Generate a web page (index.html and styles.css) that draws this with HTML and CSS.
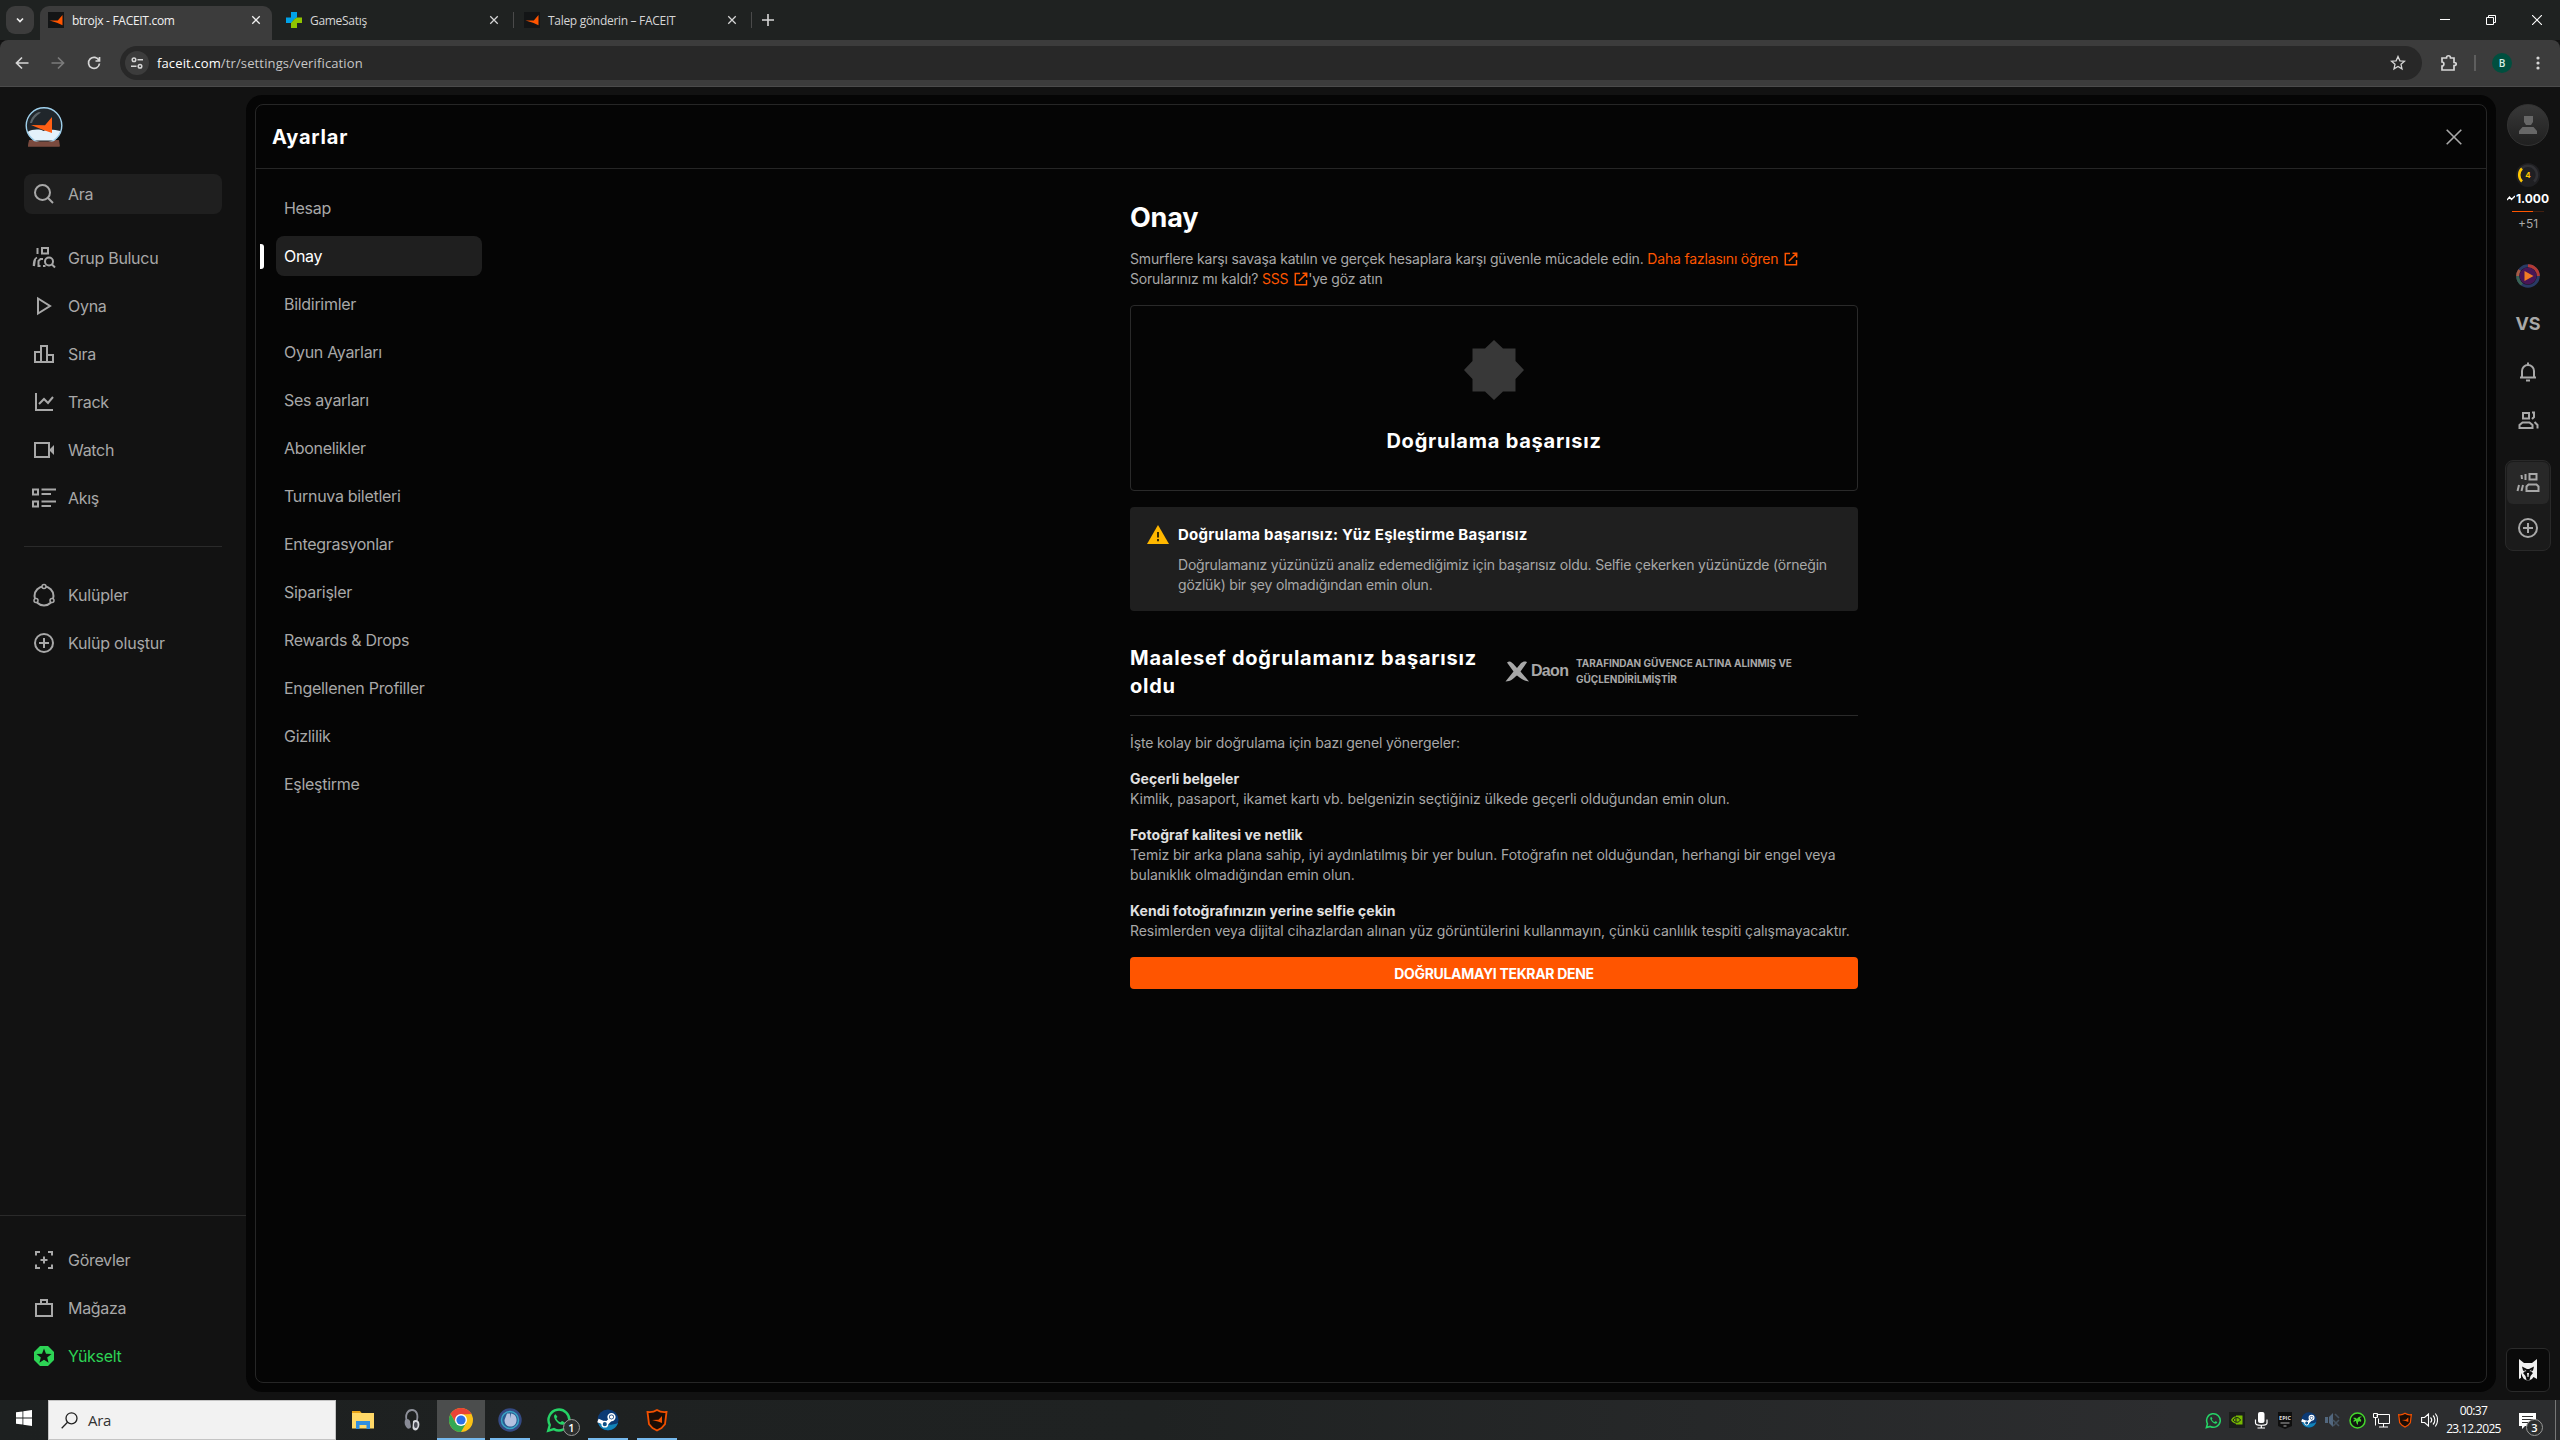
FILE: index.html
```html
<!DOCTYPE html>
<html lang="tr">

<head>
    <meta charset="UTF-8">
    <meta name="viewport" content="width=device-width, initial-scale=1.0">
    <title>btrojx - FACEIT.com</title>
    <link rel="stylesheet" href="styles.css">
</head>

<body>
    <!-- Shared icons -->
    <svg class="defs" width="0" height="0">
        <symbol id="i-close" viewBox="0 0 16 16"><path d="M2 2l12 12M14 2L2 14" fill="none" stroke="currentColor" stroke-width="2" /></symbol>
        <symbol id="i-faceit" viewBox="0 0 16 16"><path fill="#131516" d="M0 0h16v16H0z" /><path fill="#ff5500" d="M14.500 3v10.200L9 10.800 1.500 8.600h8.300z" /></symbol>
        <symbol id="i-plus-circle" viewBox="0 0 24 24"><g fill="none" stroke="currentColor" stroke-width="2"><circle cx="12" cy="12" r="9" /><path d="M12 7v10M7 12h10" /></g></symbol>
        <symbol id="i-external" viewBox="0 0 14 14"><path d="M6 1.500H1.300v11.200h11.200V8M8.500 1.300h4.200v4.200M12.500 1.500L4.800 9.200" fill="none" stroke="currentColor" stroke-width="1.500" /></symbol>
        <symbol id="i-whatsapp" viewBox="0 0 24 24"><path d="M2 22l1.500-5.400A9.600 9.600 0 1 1 7.300 20.400z" fill="none" stroke="#25d366" stroke-width="2.200" /><path d="M8.800 6.800c-2 .8-1.800 3.300.7 6.300s5.600 4.300 7.400 2.500c.8-1 .5-1.400-.2-1.800l-1.800-.8c-.6 0-1 1.100-1.500 1.100-1.500-.4-3.200-2-3.800-3.600 0-.5.900-1 .9-1.500z" fill="#25d366" /></symbol>
        <symbol id="i-steam" viewBox="0 0 24 24"><circle cx="12" cy="12" r="11.500" fill="#0b3a75" /><path d="M1 15a11.500 11.500 0 0 0 22 0c-4 3-18 3-22 0z" fill="#1283b8" /><path d="M1 12.500l9 3.700 5-5" fill="none" stroke="#fff" stroke-width="4" /><circle cx="15.800" cy="8.800" r="3.600" fill="#0b3a75" stroke="#fff" stroke-width="1.800" /><circle cx="15.800" cy="8.800" r="1.900" fill="#fff" /><circle cx="8.500" cy="16.500" r="3" fill="#0d4f86" stroke="#fff" stroke-width="1.500" /></symbol>
        <symbol id="i-shield" viewBox="0 0 24 24"><path d="M12 2c3 2 6 2.500 9.500 2l-1.500 12-3.500 4L12 22.500 7.500 20 4 16 2.500 4C6 4.500 9 4 12 2z" fill="#1a0d06" stroke="#f25000" stroke-width="1.800" /><path d="M17 8v7l-4-1.500L7 12l6.500-.3z" fill="#f25000" /></symbol>
    </svg>

    <header class="browser">
        <div class="tabs">
            <button class="tab-search"><svg width="12" height="12" viewBox="0 0 12 12"><path d="M3 4.500l3 3 3-3" fill="none" stroke="currentColor" stroke-width="1.700" /></svg></button>
            <div class="tab active">
                <svg width="16" height="16"><use href="#i-faceit" /></svg>
                <span>btrojx - FACEIT.com</span>
                <svg class="x" width="10" height="10"><use href="#i-close" /></svg>
            </div>
            <div class="tab">
                <svg width="16" height="16" viewBox="0 0 16 16"><path fill="#00a2e8" d="M5 0h6v5.500L7.500 8 5.500 11H0V5.500h5z" /><path fill="#8fc400" d="M11 5.500h5V11h-5v5H5v-5l3.500-4z" /></svg>
                <span>GameSatış</span>
                <svg class="x" width="10" height="10"><use href="#i-close" /></svg>
            </div>
            <div class="tab line">
                <svg width="16" height="16"><use href="#i-faceit" /></svg>
                <span>Talep gönderin – FACEIT</span>
                <svg class="x" width="10" height="10"><use href="#i-close" /></svg>
            </div>
            <div class="new-tab"><svg width="12" height="12" viewBox="0 0 12 12"><path d="M6 0v12M0 6h12" stroke="currentColor" stroke-width="1.600" /></svg></div>
            <div class="window-controls">
                <svg width="10" height="10" viewBox="0 0 10 10"><path d="M0 4.500h10" stroke="#fff" /></svg>
                <svg width="10" height="10" viewBox="0 0 10 10"><path d="M.5 2.500h7v7h-7zM2.500 2.500v-2h7v7h-2" fill="none" stroke="#fff" /></svg>
                <svg width="10" height="10" viewBox="0 0 10 10"><path d="M0 0l10 10M10 0L0 10" stroke="#fff" stroke-width="1.100" /></svg>
            </div>
        </div>
        <div class="toolbar">
            <svg width="16" height="16" viewBox="0 0 16 16"><path d="M14.500 8H3M8 2.500L2.500 8 8 13.500" fill="none" stroke="currentColor" stroke-width="1.700" /></svg>
            <svg class="off" width="16" height="16" viewBox="0 0 16 16"><path d="M1.500 8H13M8 2.500L13.500 8 8 13.500" fill="none" stroke="currentColor" stroke-width="1.700" /></svg>
            <svg width="16" height="16" viewBox="0 0 16 16"><path d="M13 5.500A5.500 5.500 0 1 0 13.500 8.500M13.500 2v4h-4" fill="none" stroke="currentColor" stroke-width="1.700" /></svg>
            <div class="url">
                <span class="site"><svg width="14" height="14" viewBox="0 0 14 14"><g fill="none" stroke="currentColor" stroke-width="1.500"><circle cx="4" cy="3.800" r="1.800" /><path d="M7.500 3.800H13M1 10.200h5.500" /><circle cx="10" cy="10.200" r="1.800" /></g></svg></span>
                <span class="address"><b>faceit.com</b>/tr/settings/verification</span>
                <svg class="star" width="16" height="16" viewBox="0 0 16 16"><path d="M8 1.500l1.900 4.300 4.600.4-3.500 3.100 1 4.600L8 11.500l-4 2.400 1-4.600L1.500 6.200l4.600-.4z" fill="none" stroke="currentColor" stroke-width="1.300" /></svg>
            </div>
            <svg class="puzzle" width="18" height="18" viewBox="0 0 18 18"><path d="M2 4h4.500c0-3 4-3 4 0H14v4.500c3 0 3 3 0 3V16H2v-4c2.500-.2 2.500-4 0-4z" fill="none" stroke="currentColor" stroke-width="1.700" /></svg>
            <i class="bar"></i>
            <span class="profile">B</span>
            <svg class="dots" width="4" height="14" viewBox="0 0 4 14"><g fill="currentColor"><circle cx="2" cy="2" r="1.600" /><circle cx="2" cy="7" r="1.600" /><circle cx="2" cy="12" r="1.600" /></g></svg>
        </div>
    </header>

    <div class="app">
        <aside class="sidebar">
            <svg class="logo" width="38" height="40" viewBox="0 0 38 40">
                <path d="M4 33h30l1 6.500H3z" fill="#7a4a3e" /><path d="M9 33h20v2H9z" fill="#a4695a" />
                <circle cx="19" cy="18.500" r="17.800" fill="#20262b" />
                <path d="M2.500 25c5-3 12-3 16-1 5-2 11-1 17 0-1 4-3 7-6.500 9.500H9C6 31.500 3.500 28.500 2.500 25z" fill="#e4f2fb" />
                <circle cx="19" cy="18.500" r="17.800" fill="none" stroke="#9fd0ec" stroke-width="1.400" />
                <path d="M5 16c1-5 4-9 9-11l2 .5C11 9 8 12 7 16z" fill="#5b6469" />
                <path d="M27 10v16l-10-3.500L6 18l14 .3z" fill="#ff5f14" />
                <path d="M4 34.500h30v5H3z" fill="#7a4a3e" />
            </svg>
            <div class="search">
                <svg class="ico" viewBox="0 0 24 24"><circle cx="10.500" cy="10.500" r="7.500" /><path d="M16 16l5 5" /></svg>
                <span>Ara</span>
            </div>
            <nav class="menu">
                <a><svg class="ico" viewBox="0 0 24 24"><path d="M10 2h6v5.500h-6zM5.500 2v6M3 13l-1 7M8.500 20H6.500v-5l2-2H11M13.500 20H11" /><path d="M5 11.500c-2 1-3.500 3-3.500 8.500" stroke-width="1.500" /><circle cx="17" cy="15.500" r="4" /><path d="M20 18.500l3 3" /></svg><span>Grup Bulucu</span></a>
                <a><svg class="ico" viewBox="0 0 24 24"><path d="M6 4.500v15L18 12z" /></svg><span>Oyna</span></a>
                <a><svg class="ico" viewBox="0 0 24 24"><path d="M3 10h6v10H3zM9 4h6v16H9zM15 13h6v7h-6z" /></svg><span>Sıra</span></a>
                <a><svg class="ico" viewBox="0 0 24 24"><path d="M4 3v17h17M7 14l5-5 4 4 5-6" /></svg><span>Track</span></a>
                <a><svg class="ico" viewBox="0 0 24 24"><path d="M3 5h14v14H3z" /><path d="M17 12l5-5v10z" fill="currentColor" stroke="none" /></svg><span>Watch</span></a>
                <a><svg class="ico" viewBox="0 0 24 24"><path d="M1 3.500h5v5H1zM1 15.500h5v5H1zM9.500 3.500H24M9.500 8H19M9.500 15.500H24M9.500 20H19" /></svg><span>Akış</span></a>
            </nav>
            <nav class="menu clubs">
                <a><svg class="ico" viewBox="0 0 24 24"><circle cx="12" cy="13" r="9.500" /><g class="joint"><circle cx="12" cy="3.500" r="2" /><circle cx="4" cy="17.500" r="2" /><circle cx="20" cy="17.500" r="2" /></g></svg><span>Kulüpler</span></a>
                <a><svg class="ico"><use href="#i-plus-circle" /></svg><span>Kulüp oluştur</span></a>
            </nav>
            <nav class="menu bottom">
                <a><svg class="ico" viewBox="0 0 24 24"><path d="M4 7.500V4h4M16 4h4v3.500M20 16.500V20h-4M8 20H4v-3.500M12 8.500v7M8.500 12h7" /></svg><span>Görevler</span></a>
                <a><svg class="ico" viewBox="0 0 24 24"><path d="M4 8h16v12H4zM9 8V4h6v4" /></svg><span>Mağaza</span></a>
                <a class="upgrade"><svg class="ico" viewBox="0 0 24 24"><path d="M8 2h8l6 6v8l-6 6H8l-6-6V8z" fill="#2dd455" stroke="none" /><path d="M12 4.500l2 5.200 5.500.2-4.300 3.500 1.400 5.400-4.600-3.100-4.600 3.100 1.400-5.400L4.500 9.900l5.500-.2z" fill="#121212" stroke="none" /></svg><span>Yükselt</span></a>
            </nav>
        </aside>

        <main class="stage">
            <div class="modal">
                <div class="modal-head">
                    <h1>Ayarlar</h1>
                    <svg width="16" height="16" viewBox="0 0 16 16"><path d="M.7.700l14.600 14.600M15.300.700L.7 15.300" stroke="currentColor" stroke-width="1.600" /></svg>
                </div>
                <div class="modal-body">
                    <nav class="settings">
                        <a>Hesap</a>
                        <a class="current">Onay</a>
                        <a>Bildirimler</a>
                        <a>Oyun Ayarları</a>
                        <a>Ses ayarları</a>
                        <a>Abonelikler</a>
                        <a>Turnuva biletleri</a>
                        <a>Entegrasyonlar</a>
                        <a>Siparişler</a>
                        <a>Rewards &amp; Drops</a>
                        <a>Engellenen Profiller</a>
                        <a>Gizlilik</a>
                        <a>Eşleştirme</a>
                    </nav>
                    <section class="verify">
                        <h2>Onay</h2>
                        <p class="lead">Smurflere karşı savaşa katılın ve gerçek hesaplara karşı güvenle mücadele edin. <a class="link">Daha fazlasını öğren <svg width="14" height="14"><use href="#i-external" /></svg></a><br>Sorularınız mı kaldı? <a class="link">SSS <svg width="14" height="14"><use href="#i-external" /></svg></a>'ye göz atın</p>

                        <div class="status">
                            <svg width="60" height="60" viewBox="0 0 60 60"><path fill="#383838" d="M30 0l9 8.500h12.500V21L60 30l-8.500 9v12.500H39L30 60l-9-8.500H8.500V39L0 30l8.500-9V8.500H21z" /></svg>
                            <h3>Doğrulama başarısız</h3>
                        </div>

                        <div class="alert">
                            <svg width="22" height="19" viewBox="0 0 22 19"><path d="M11 0l11 19H0z" fill="#ffb800" /><path d="M11 7v5.500M11 14v2.200" stroke="#3a2b00" stroke-width="2" /></svg>
                            <div>
                                <h4>Doğrulama başarısız: Yüz Eşleştirme Başarısız</h4>
                                <p>Doğrulamanız yüzünüzü analiz edemediğimiz için başarısız oldu. Selfie çekerken yüzünüzde (örneğin<br>gözlük) bir şey olmadığından emin olun.</p>
                            </div>
                        </div>

                        <div class="result">
                            <h3>Maalesef doğrulamanız başarısız<br>oldu</h3>
                            <div class="daon">
                                <svg width="24" height="21" viewBox="0 0 24 21"><path fill="#a8a8a8" d="M2 1.500C5-1 7 1 12 7c4-5 5-7 9-6.500l1 .8L15.500 10.500 24 20.500c-5-.5-8-3-12-6-4 3-6 6-11.500 6L8.500 10.500z" /></svg>
                                <b>Daon</b>
                                <span>TARAFINDAN GÜVENCE ALTINA ALINMIŞ VE<br>GÜÇLENDİRİLMİŞTİR</span>
                            </div>
                        </div>

                        <p class="intro">İşte kolay bir doğrulama için bazı genel yönergeler:</p>
                        <h5>Geçerli belgeler</h5>
                        <p>Kimlik, pasaport, ikamet kartı vb. belgenizin seçtiğiniz ülkede geçerli olduğundan emin olun.</p>
                        <h5>Fotoğraf kalitesi ve netlik</h5>
                        <p>Temiz bir arka plana sahip, iyi aydınlatılmış bir yer bulun. Fotoğrafın net olduğundan, herhangi bir engel veya<br>bulanıklık olmadığından emin olun.</p>
                        <h5>Kendi fotoğrafınızın yerine selfie çekin</h5>
                        <p class="last">Resimlerden veya dijital cihazlardan alınan yüz görüntülerini kullanmayın, çünkü canlılık tespiti çalışmayacaktır.</p>
                        <button class="retry">DOĞRULAMAYI TEKRAR DENE</button>
                    </section>
                </div>
            </div>
        </main>

        <aside class="rail">
            <div class="avatar"><svg width="18" height="18" viewBox="0 0 18 18"><path d="M5 0h9v6l-2 3H7L5 6zM0 18v-3l3.500-4h11l3.500 4v3z" fill="#676767" /></svg></div>
            <svg class="level" width="24" height="24" viewBox="0 0 24 24"><circle cx="12" cy="12" r="12" fill="#1f1f22" /><path d="M6 18.500a9 9 0 1 1 12 0" fill="none" stroke="#303034" stroke-width="2.500" /><path d="M6 18.500a9 9 0 0 1 0-13" fill="none" stroke="#ffc800" stroke-width="2.500" /><text x="12" y="15" text-anchor="middle" class="level-text">4</text></svg>
            <div class="elo"><svg width="8" height="6" viewBox="0 0 8 6"><path d="M0 5l2.500-3 2 2.500L8 1" fill="none" stroke="#fff" stroke-width="1.400" /></svg><span>1.000</span></div>
            <div class="progress"><i></i></div>
            <div class="gain">+51</div>
            <svg class="media" width="24" height="24" viewBox="0 0 24 24"><g fill="none" stroke-width="3"><circle cx="12" cy="12" r="10.300" stroke="#293a65" /><path d="M12 1.700A10.300 10.300 0 0 1 22.300 12" stroke="#b33a35" /><path d="M6 20.400A10.300 10.300 0 0 1 1.700 12" stroke="#3a6255" /><path d="M1.700 12A10.300 10.300 0 0 1 3.500 6" stroke="#a85b43" /></g><circle cx="12" cy="12" r="8.500" fill="#481656" /><path d="M8.500 7v10l9-5z" fill="#f07c24" /></svg>
            <div class="vs">VS</div>
            <svg class="ico bell" viewBox="0 0 24 24"><path d="M6 17v-6a6 6 0 0 1 12 0v6M4 17.500h16M10 20.500h4M12 2.500V5" /></svg>
            <svg class="ico friends" viewBox="0 0 24 24"><path d="M7 5h6v5.500H7zM3.500 20v-3l3-2.500h7l3 2.500v3zM16 4.500h2V9l-2 2M18.500 14l3 3v3.500" /></svg>
            <div class="party">
                <div class="party-on"><svg class="ico" viewBox="0 0 24 24"><path d="M13.500 3h7v5.500h-7zM10.500 20v-4.500l2-2h8l2 2V20zM9.500 3v6M5.500 4l.5 4M7 14l-1.500 6M3 14l-1.500 6" /></svg></div>
                <svg class="ico"><use href="#i-plus-circle" /></svg>
            </div>
            <div class="wolf"><svg width="18" height="22" viewBox="0 0 18 22"><path fill="#f0f0f0" d="M0 0l5 4h8l5-4v20l-3.500-2-1.500 2-4 2-4-2-1.500-2L0 20z" /><path fill="#0d0d0d" d="M3 7.500l5 2.500h2l5-2.500-1 4-2 1 2 1.500-2.500 3-1 4L9 22l-1.500-1-1-4L4 14l2-1.500-2-1zM2 14l2 5H2z" /><path fill="#f0f0f0" d="M5 10.500l2.500 1.500-1 .5zM13 10.500L10.500 12l1 .5zM8 14h2l-.5 4h-1z" /></svg></div>
        </aside>
    </div>

    <footer class="taskbar">
        <div class="start"><svg width="16" height="16" viewBox="0 0 16 16"><path fill="#fff" d="M0 2.300L6.500 1.400v6.200H0zM7.300 1.300L16 0v7.600H7.300zM0 8.400h6.500v6.200L0 13.700zM7.300 8.400H16V16l-8.700-1.300z" /></svg></div>
        <div class="find"><svg width="17" height="17" viewBox="0 0 17 17"><g fill="none" stroke="#222" stroke-width="1.300"><circle cx="10.500" cy="6.300" r="5.500" /><path d="M6.500 10.300L.7 16.200" /></g></svg><span>Ara</span></div>
        <div class="apps">
            <div class="app-btn"><svg width="22" height="18" viewBox="0 0 22 18"><path fill="#e8a317" d="M0 0h8l2 2.500H0z" /><path fill="#ffd867" d="M0 2h22v15.500H0z" /><path fill="#2f8ee0" d="M4 10h14v8h-3.500v-4h-7v4H4z" /></svg></div>
            <div class="app-btn"><svg width="18" height="24" viewBox="0 0 18 24"><path d="M4 14C1.500 6 5 2 9 2s7 4 4.500 12" fill="none" stroke="#8f919b" stroke-width="1.800" /><path d="M2 12c2-2 4-1 5 1l1 6c-1 2-3 2-4 1-2-2-3-5-2-8z" fill="#888b96" /><path d="M10 13c2-2 5-1 6 1 1 3 0 6-2 8-2 1-4 0-4.500-2z" fill="#d5d7dc" /><ellipse cx="12.800" cy="17" rx="1.800" ry="3" fill="#4a4c55" /></svg></div>
            <div class="app-btn focused open"><svg width="24" height="24" viewBox="0 0 24 24"><circle cx="12" cy="12" r="12" fill="#fbc116" /><path d="M1.600 6A12 12 0 0 1 22.400 6L12 6.500l-5 8.400z" fill="#ea4335" /><path d="M1.600 6A12 12 0 0 0 12 24l5.200-9-10.400 0z" fill="#34a853" /><circle cx="12" cy="12" r="6" fill="#fff" /><circle cx="12" cy="12" r="4.600" fill="#2c70e6" /></svg></div>
            <div class="app-btn open"><svg width="24" height="24" viewBox="0 0 24 24"><circle cx="12" cy="12" r="11.700" fill="#344a83" /><circle cx="12" cy="12" r="8.500" fill="#295b91" stroke="#39a6c6" stroke-width="1.500" /><path d="M9 5.500h3v5l1-5c4 .5 6 3.500 5.500 7.500s-3.500 6-7 5.500-5-3.500-5-6.500z" fill="#b4c1e0" /></svg></div>
            <div class="app-btn"><svg width="26" height="26"><use href="#i-whatsapp" /></svg><span class="count">1</span></div>
            <div class="app-btn open"><svg width="22" height="22"><use href="#i-steam" /></svg></div>
            <div class="app-btn open"><svg width="24" height="24"><use href="#i-shield" /></svg></div>
        </div>
        <div class="tray">
            <svg width="17" height="17"><use href="#i-whatsapp" /></svg>
            <svg width="16" height="16" viewBox="0 0 16 16"><path fill="#1a1d1a" d="M0 0h16v16H0z" /><path fill="#76b900" d="M7 3.500h6.500v9H7zM2 8c1-2.500 3-3.800 5-3.800v7.500C5 11.500 3 10 2 8z" /><path d="M4 8c2-3.500 6-3 7.500 0-2 3-5.500 3-7.500 0zM7 6v4" fill="none" stroke="#1a1d1a" /></svg>
            <svg width="14" height="17" viewBox="0 0 14 17"><rect x="4" y="0" width="6.500" height="11" rx="2" fill="#fff" /><path d="M1.500 7.500v3.500c0 3 11.500 3 11.500 0V7.500M7.300 13v3M3.500 16h7.500" fill="none" stroke="#fff" stroke-width="1.200" /></svg>
            <svg width="14" height="17" viewBox="0 0 14 17"><path fill="#0e0e0e" d="M0 0h14v14l-7 3-7-3z" /><text x="7" y="8" text-anchor="middle" class="epic">EPIC</text><path d="M2.500 11h9M5.500 14h3" stroke="#aaa" /></svg>
            <svg width="16" height="16"><use href="#i-steam" /></svg>
            <svg width="16" height="16" viewBox="0 0 16 16"><path fill="#52677e" d="M0 5h3v6H0zM4 5l4-4v14l-4-4z" /><path d="M8 8l6 6M14 8l-6 6M10 2l4 4" stroke="#455361" stroke-width="1.600" /></svg>
            <svg width="17" height="17" viewBox="0 0 17 17"><circle cx="8.500" cy="8.500" r="7.500" fill="#101510" stroke="#44d62c" stroke-width="1.500" /><path d="M4 6c2-.5 3 0 4 1 1-2 3-3 5-2-2 0-2 1-2 2 1 0 1.500 1 1 3-1-1-2-1-3 0v3c-1-1-2-2-2-4-1 0-2 .5-2 1.500C4 9 4.500 8 6 7.500z" fill="#44d62c" /></svg>
            <svg width="17" height="15" viewBox="0 0 17 15"><path d="M4 3.500V1.500h12.500v9h-11v-5M10.500 11v3M6 14h9M.5.500h4v4h-4zM2.500 4.500v8" fill="none" stroke="#fff" /></svg>
            <svg width="16" height="16"><use href="#i-shield" /></svg>
            <svg width="17" height="16" viewBox="0 0 17 16"><path d="M.6 5.500h3L7.500 2v12L3.600 10.500h-3zM9.500 5.500c1.500 1.500 1.500 3.500 0 5M12 3.500c2.500 2.500 2.500 6.500 0 9M14.300 1.500c3 3.500 3 9.500 0 13" fill="none" stroke="#fff" stroke-width="1.100" /></svg>
        </div>
        <div class="clock"><span>00:37</span><span>23.12.2025</span></div>
        <div class="notes"><svg width="17" height="16" viewBox="0 0 17 16"><path fill="#fff" d="M0 0h17v13H6l-3 3v-3H0z" /><path d="M3 3.500h11M3 6.500h11M3 9.500h7" stroke="#333" /></svg><span class="count">3</span></div>
    </footer>
</body>

</html>
```
FILE: styles.css
```css
* {
    box-sizing: border-box;
}

body {
    margin: 0;
    width: 2560px;
    height: 1440px;
    display: flex;
    flex-direction: column;
    overflow: hidden;
    background-color: #121212;
    color: #a8a8a8;
    font-family: Inter, sans-serif;
    font-size: 16px;
}

h1, h2, h3, h4, h5, p {
    margin: 0;
}

svg {
    flex-shrink: 0;
}

.defs {
    position: absolute;
}

/* browser */
.browser {
    height: 87px;
    font-family: "Open Sans", sans-serif;
    font-size: 12px;
    color: #d6d6d6;
}

.tabs {
    height: 40px;
    padding: 6px 0 0 6px;
    display: flex;
    background-color: #1f2221;
}

.tab-search {
    width: 28px;
    height: 28px;
    margin-right: 6px;
    padding: 8px;
    border: 0;
    border-radius: 9px;
    background-color: #3c3c3c;
    color: #eee;
}

.tab-search svg {
    display: block;
}

.tab {
    width: 232px;
    height: 34px;
    padding: 0 11px 6px 8px;
    display: flex;
    align-items: center;
    gap: 8px;
    letter-spacing: -0.3px;
}

.tab + .tab {
    width: 238px;
    padding-left: 14px;
    padding-right: 11px;
}

.tab.active {
    border-radius: 9px 9px 0 0;
    background-color: #3c3c3c;
    color: #f0f0f0;
}

.tab.line {
    position: relative;
}

.tab.line::before,
.new-tab::before {
    content: "";
    width: 1px;
    height: 16px;
    background-color: #4a4a4a;
}

.tab.line::before {
    position: absolute;
    left: 3px;
}

.tab .x {
    margin-left: auto;
}

.new-tab {
    height: 28px;
    margin-left: 3px;
    display: flex;
    align-items: center;
    gap: 10px;
}

.window-controls {
    height: 28px;
    margin-left: auto;
    padding-right: 18px;
    display: flex;
    align-items: center;
    gap: 36px;
}

.toolbar {
    height: 47px;
    padding: 0 20px 0 14px;
    display: flex;
    align-items: center;
    gap: 20px;
    border-bottom: 1px solid #4b4b4b;
    border-radius: 8px 8px 0 0;
    background-color: #3c3c3c;
}

.toolbar .off {
    color: #7b7b7b;
}

.url {
    flex: 1;
    height: 34px;
    margin: 0 -3px 0 -2px;
    padding: 0 16px 0 5px;
    display: flex;
    align-items: center;
    gap: 8px;
    border-radius: 17px;
    background-color: #282828;
}

.url b {
    font-weight: 400;
    color: #fff;
}

.address {
    font-size: 13px;
    letter-spacing: 0.13px;
    color: #c7c7c7;
}

.site {
    width: 24px;
    height: 24px;
    padding: 5px;
    border-radius: 50%;
    background-color: #3c3c3c;
}

.site svg {
    display: block;
}

.star {
    margin-left: auto;
}

.puzzle {
    margin: 0 -1px 0 1px;
}

.bar {
    width: 2px;
    height: 16px;
    margin: 0 -4px 0 -3px;
    background-color: #5e5e5e;
}

.profile {
    width: 20px;
    height: 20px;
    line-height: 20px;
    border-radius: 50%;
    background-color: #004f3f;
    color: #d8efe6;
    font-size: 10px;
    font-weight: 600;
    text-align: center;
}

.dots {
    margin-left: 4px;
}

/* page */
.app {
    height: 1313px;
    display: flex;
}

.ico {
    width: 24px;
    height: 24px;
    fill: none;
    stroke: currentColor;
    stroke-width: 2;
}

.sidebar {
    width: 246px;
    display: flex;
    flex-direction: column;
}

.logo {
    margin: 20px 0 27px 25px;
}

.search {
    width: 198px;
    height: 40px;
    margin: 0 0 20px 24px;
    padding-left: 8px;
    display: flex;
    align-items: center;
    gap: 12px;
    border-radius: 8px;
    background-color: #1f1f1f;
}

.search,
.menu,
.settings {
    letter-spacing: -0.3px;
}

.menu {
    padding: 0 24px;
}

.menu a {
    height: 48px;
    padding-left: 8px;
    display: flex;
    align-items: center;
    gap: 12px;
}

.clubs {
    margin: 24px 24px 0;
    padding: 24px 0 0;
    border-top: 1px solid #2a2a2a;
}

.clubs a {
    letter-spacing: -0.2px;
}

.joint {
    fill: #121212;
    stroke-width: 1.5;
}

.bottom {
    margin-top: auto;
    padding-top: 20px;
    padding-bottom: 20px;
    border-top: 1px solid #2a2a2a;
}

.menu .upgrade {
    color: #2dd455;
}

.stage {
    flex: 1;
    margin: 8px 0;
    padding: 9px;
    border-radius: 16px;
    background-color: #050505;
}

.modal {
    height: 1279px;
    border: 1px solid #262626;
    border-radius: 8px;
}

.modal-head {
    height: 64px;
    padding: 0 24px 0 16px;
    display: flex;
    align-items: center;
    justify-content: space-between;
    border-bottom: 1px solid #262626;
}

h1, h2, h3 {
    color: #fff;
    font-size: 20px;
    font-weight: 700;
    line-height: 28px;
    letter-spacing: 0.77px;
}

.modal-body {
    display: flex;
}

.settings {
    width: 230px;
    padding: 19px 4px 0 20px;
    display: flex;
    flex-direction: column;
    gap: 8px;
}

.settings a {
    position: relative;
    height: 40px;
    line-height: 40px;
    padding-left: 8px;
    border-radius: 8px;
}

.settings .current {
    background-color: #1f1f1f;
    color: #fff;
}

.settings .current::before {
    content: "";
    position: absolute;
    left: -16px;
    top: 8px;
    width: 4px;
    height: 25px;
    border-radius: 0 3px 3px 0;
    background-color: #fff;
}

.verify {
    width: 728px;
    margin-left: 644px;
    padding-top: 32px;
    font-size: 14px;
    line-height: 20px;
    letter-spacing: -0.07px;
}

.verify h2 {
    margin-bottom: 14px;
    font-size: 27px;
    line-height: 34px;
    letter-spacing: -0.2px;
}

.lead {
    letter-spacing: -0.18px;
}

.link {
    color: #ff5500;
}

.link svg {
    margin-left: 2px;
    vertical-align: -2px;
}

.status {
    height: 186px;
    margin: 16px 0;
    padding-top: 34px;
    display: flex;
    flex-direction: column;
    align-items: center;
    gap: 27px;
    border: 1px solid #2a2a2a;
    border-radius: 4px;
}

.alert {
    height: 104px;
    padding: 18px 0 0 17px;
    display: flex;
    gap: 9px;
    border-radius: 4px;
    background-color: #1f1f1f;
}

.alert h4 {
    margin-bottom: 10px;
    color: #fff;
    font-size: 15px;
    line-height: 20px;
    letter-spacing: 0.24px;
}

.alert p {
    letter-spacing: -0.2px;
}

.result {
    height: 105px;
    padding-top: 33px;
    display: flex;
    justify-content: space-between;
    border-bottom: 1px solid #2a2a2a;
}

.daon {
    width: 353px;
    height: 54px;
    display: flex;
    align-items: center;
}

.daon b {
    margin: 0 8px 0 2px;
    width: 37px;
    font-family: "Liberation Sans", sans-serif;
    font-size: 16px;
    letter-spacing: -0.7px;
    color: #a8a8a8;
}

.daon span {
    font-size: 10px;
    font-weight: 700;
    line-height: 16px;
    letter-spacing: -0.03px;
}

.intro {
    margin-top: 17px;
    letter-spacing: -0.12px;
}

h5 {
    margin-top: 16px;
    color: #e0e0e0;
    font-size: 14px;
    letter-spacing: 0.06px;
}

.last {
    margin-bottom: 16px;
}

.retry {
    width: 728px;
    height: 32px;
    border: 0;
    border-radius: 4px;
    background-color: #ff5500;
    color: #fff;
    font: 700 14px Inter, sans-serif;
    letter-spacing: -0.33px;
}

/* right rail */
.rail {
    width: 64px;
    display: flex;
    flex-direction: column;
    align-items: center;
}

.avatar {
    width: 42px;
    height: 42px;
    margin: 17px 0 17px;
    display: flex;
    align-items: center;
    justify-content: center;
    border: 1px solid #333;
    border-radius: 50%;
    background: linear-gradient(#383838, #202020);
}

.level-text {
    fill: #ffc800;
    font-size: 8px;
    font-weight: 700;
}

.elo {
    height: 24px;
    padding-bottom: 2px;
    display: flex;
    align-items: center;
    gap: 1px;
    color: #fff;
    font-size: 12px;
    font-weight: 700;
}

.progress {
    width: 32px;
    height: 1px;
    background-color: #45200f;
}

.progress i {
    display: block;
    width: 21px;
    height: 1px;
    background-color: #ff5500;
}

.gain {
    margin: 3px 0 31px;
    font-size: 12px;
    line-height: 18px;
}

.vs {
    margin: 22px 0;
    font-size: 18px;
    font-weight: 700;
    line-height: 28px;
}

.friends {
    margin: 24px 0 28px;
}

.party {
    width: 46px;
    height: 91px;
    padding-top: 1px;
    display: flex;
    flex-direction: column;
    align-items: center;
    gap: 12px;
    border: 1px solid #292929;
    border-radius: 8px;
    background-color: #1b1b1b;
}

.party-on {
    width: 42px;
    height: 42px;
    padding: 9px;
    border-radius: 6px;
    background-color: #282828;
}

.wolf {
    width: 44px;
    height: 44px;
    margin: auto 0 8px;
    display: flex;
    align-items: center;
    justify-content: center;
    border: 1px solid #2a2a2a;
    border-radius: 6px;
    background-color: #0a0a0a;
}

/* windows taskbar */
.taskbar {
    height: 40px;
    display: flex;
    align-items: center;
    background: linear-gradient(90deg, #1d2020, #1f2222 45%, #2c2d2f 85%);
    font-family: "Open Sans", sans-serif;
    color: #fff;
}

.start {
    width: 48px;
    padding-left: 16px;
}

.find {
    width: 288px;
    height: 40px;
    padding-left: 12px;
    display: flex;
    align-items: center;
    gap: 10px;
    border: 1px solid #c4c4c4;
    background-color: #f2f2f2;
    color: #333;
    font-size: 15px;
    letter-spacing: -0.3px;
}

.apps {
    padding-left: 3px;
    display: flex;
    gap: 1px;
}

.app-btn {
    position: relative;
    width: 48px;
    height: 40px;
    display: flex;
    align-items: center;
    justify-content: center;
}

.app-btn.open::after {
    content: "";
    position: absolute;
    left: 4px;
    right: 4px;
    bottom: 0;
    height: 2px;
    background-color: #76b9ed;
}

.app-btn.focused {
    background-color: #4b4d4d;
}

.app-btn.focused::after {
    left: 0;
    right: 0;
}

.count {
    position: absolute;
    right: 3px;
    bottom: 4px;
    width: 17px;
    height: 17px;
    border: 1px solid #999;
    border-radius: 50%;
    background-color: #2c2e2e;
    font-size: 11px;
    font-weight: 600;
    line-height: 15px;
    text-align: center;
}

.tray {
    margin-left: auto;
    display: grid;
    grid-template-columns: repeat(10, 24px);
    justify-items: center;
    align-items: center;
}

.epic {
    fill: #ddd;
    font-size: 5.5px;
    font-weight: 700;
}

.clock {
    width: 67px;
    padding-right: 2px;
    display: flex;
    flex-direction: column;
    align-items: center;
    font-size: 12px;
    line-height: 18px;
    letter-spacing: -0.65px;
}

.notes {
    position: relative;
    width: 48px;
    height: 40px;
    padding: 12px 0 0 11px;
    margin-right: 4px;
    border-right: 1px solid #777;
}

.notes .count {
    right: 12px;
    bottom: 4px;
}
```
